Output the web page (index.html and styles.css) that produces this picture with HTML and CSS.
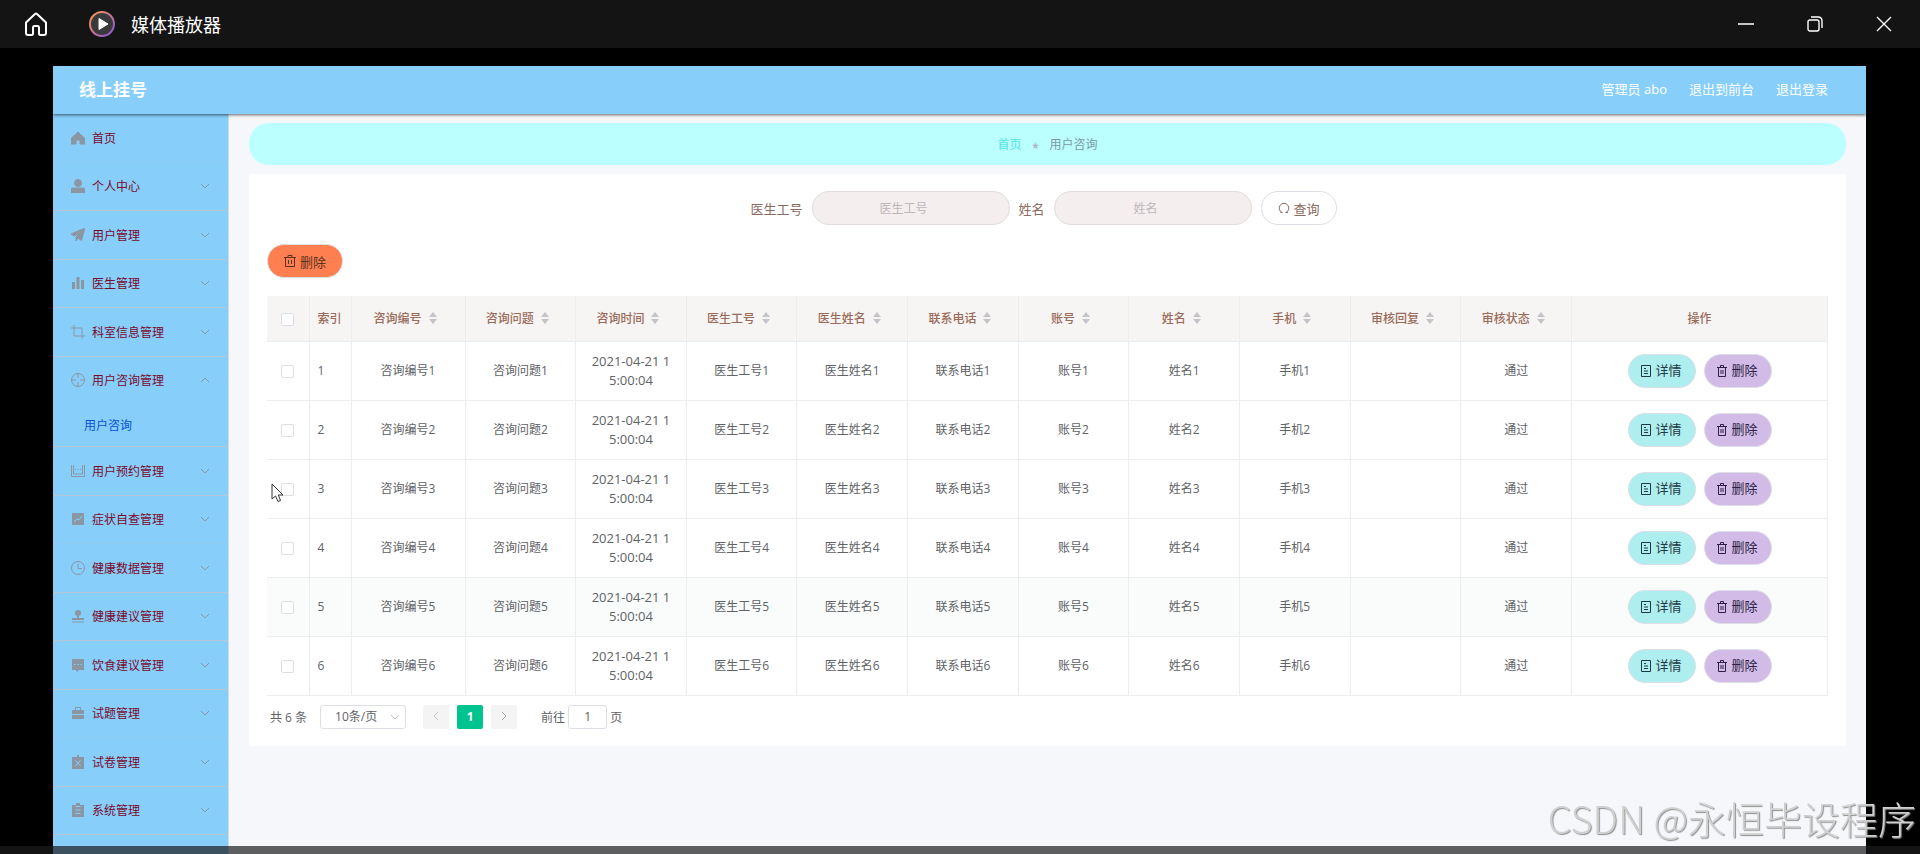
FILE: index.html
```
<!DOCTYPE html>
<html lang="zh-CN">
<head>
    <meta charset="UTF-8">
    <title>媒体播放器</title>
    <link rel="stylesheet" href="styles.css">
</head>
<body>
    <div class="titlebar">
        <button class="title-btn" aria-label="主页">
            <svg width="24" height="26" viewBox="0 0 24 26" fill="none" stroke="#fff" stroke-width="2" stroke-linejoin="round"><path d="M2 11.500 L11 3 Q12 2 13 3 L22 11.500 V22 Q22 24 20 24 H16.500 Q15 24 15 22.500 V17 Q15 15 13.500 15 H10.500 Q9 15 9 17 V22.500 Q9 24 7.500 24 H4 Q2 24 2 22 Z"/></svg>
        </button>
        <svg class="player-logo" width="28" height="28" viewBox="0 0 28 28">
            <defs>
                <linearGradient id="ring" x1="0" y1="0" x2="1" y2="1">
                    <stop offset="0" stop-color="#ff9a3c"/>
                    <stop offset="0.500" stop-color="#c9739a"/>
                    <stop offset="1" stop-color="#7a55d8"/>
                </linearGradient>
            </defs>
            <circle cx="14" cy="14" r="12" fill="#3a3a3c" stroke="url(#ring)" stroke-width="2"/>
            <path d="M11 8.500 L20 14 L11 19.500 Z" fill="#fff" stroke="#fff" stroke-linejoin="round"/>
        </svg>
        <span class="title-text">媒体播放器</span>
        <div class="window-btns">
            <button class="title-btn" aria-label="最小化">
                <svg width="16" height="16" viewBox="0 0 16 16" stroke="#fff" stroke-width="1.500"><path d="M0 8 H16"/></svg>
            </button>
            <button class="title-btn" aria-label="还原">
                <svg width="16" height="16" viewBox="0 0 16 16" fill="none" stroke="#fff" stroke-width="1.400"><rect x="1" y="4" width="11" height="11" rx="2"/><path d="M4 1 H11 Q15 1 15 5 V12"/></svg>
            </button>
            <button class="title-btn" aria-label="关闭">
                <svg width="16" height="16" viewBox="0 0 16 16" stroke="#fff" stroke-width="1.400"><path d="M1 1 L15 15 M15 1 L1 15"/></svg>
            </button>
        </div>
    </div>

    <div class="app">
        <header class="header">
            <h1>线上挂号</h1>
            <nav class="user-nav">
                <span>管理员 abo</span>
                <a href="#">退出到前台</a>
                <a href="#">退出登录</a>
            </nav>
        </header>

        <div class="main">
            <nav class="sidebar" id="sidebar"></nav>

            <main class="content">
                <div class="breadcrumb">
                    <a href="#">首页</a>
                    <span class="star">★</span>
                    <span>用户咨询</span>
                </div>

                <section class="card">
                    <form class="search">
                        <label for="gonghao">医生工号</label>
                        <input type="text" id="gonghao" placeholder="医生工号">
                        <label for="xingming">姓名</label>
                        <input type="text" id="xingming" placeholder="姓名">
                        <button type="button" class="btn btn-search">
                            <svg width="12" height="12" viewBox="0 0 12 12" fill="none" stroke="#8b6b60"><path d="M4 10.500 A4.800 4.800 0 1 1 8 10.500 M7.500 10.500 H10 M4.500 10.500 H2.500"/></svg>
                            查询
                        </button>
                    </form>

                    <button type="button" class="btn btn-remove">
                        <svg width="12" height="12" viewBox="0 0 12 12" fill="none" stroke="#5a3320"><path d="M0 2.500 H12 M4 2.500 V0.500 H8 V2.500 M1.500 2.500 V11.500 H10.500 V2.500 M4.500 5 V9 M7.500 5 V9"/></svg>
                        删除
                    </button>

                    <table>
                        <colgroup>
                            <col class="col-check">
                            <col class="col-index">
                            <col class="col-number">
                            <col span="10">
                            <col class="col-action">
                        </colgroup>
                        <thead>
                            <tr id="thead"></tr>
                        </thead>
                        <tbody id="tbody"></tbody>
                    </table>

                    <div class="pagination">
                        <span>共 6 条</span>
                        <div class="page-size">
                            <select aria-label="每页条数">
                                <option>10条/页</option>
                            </select>
                            <svg width="10" height="6" viewBox="0 0 10 6" fill="none" stroke="#c0c4cc"><path d="M1 1 L5 5 L9 1"/></svg>
                        </div>
                        <div class="pager">
                            <button type="button" aria-label="上一页"><svg width="6" height="10" viewBox="0 0 6 10" fill="none" stroke="#c0c4cc"><path d="M5 1 L1 5 L5 9"/></svg></button>
                            <button type="button" class="active">1</button>
                            <button type="button" aria-label="下一页"><svg width="6" height="10" viewBox="0 0 6 10" fill="none" stroke="#a0a4aa"><path d="M1 1 L5 5 L1 9"/></svg></button>
                        </div>
                        <div class="jump">
                            <label for="page">前往</label>
                            <input type="text" id="page" value="1">
                            <span>页</span>
                        </div>
                    </div>
                </section>
            </main>
        </div>
    </div>

    <div class="player-bar"></div>
    <div class="watermark">CSDN @永恒毕设程序</div>

    <script>
        const icons = {
            home: '<path fill="currentColor" d="M7 1 L14 7.500 V13 H9 V9 H5 V13 H0 V7.500 Z"/>',
            user: '<circle fill="currentColor" cx="7" cy="4" r="3.500"/><path fill="currentColor" d="M0 14 V11 Q0 9 2 9 H12 Q14 9 14 11 V14 Z"/>',
            plane: '<path fill="currentColor" d="M14 0 L0 6 L3.500 8 L11 3 L5 9 V13 L7 10 L10.500 12.500 Z"/>',
            chart: '<path stroke="none" fill="currentColor" d="M1 6 H4 V13 H1 Z M5.500 1 H8.500 V13 H5.500 Z M10 4 H13 V13 H10 Z"/>',
            crop: '<path d="M3 0 V11 H14 M0 3 H11 V14"/>',
            aim: '<circle cx="7" cy="7" r="6.500"/><path d="M7 0.500 V5 M7 9 V13.500 M0.500 7 H5 M9 7 H13.500"/>',
            chat: '<path d="M0.500 1 V12.500 H13.500 V1 M2.500 1 V10 H11.500 V1"/><path d="M4 5.500 H5 M6.500 5.500 H7.500 M9 5.500 H10"/>',
            trend: '<path stroke="none" fill="currentColor" d="M1 1 H13 V13 H1 Z"/><path stroke="#87cefa" d="M3 10 L6 7 L8 8 L11 4"/>',
            clock: '<circle cx="7" cy="7" r="6.500"/><path d="M7 3 V7.500 H11"/>',
            stamp: '<circle stroke="none" fill="currentColor" cx="7" cy="4" r="3"/><path stroke="none" fill="currentColor" d="M6 6 H8 V9 H13 V11 H1 V9 H6 Z"/><path d="M1 13 H13"/>',
            message: '<path stroke="none" fill="currentColor" d="M1 1 H13 V12 H8 L6 14 L5 12 H1 Z"/><path stroke="#87cefa" d="M3 6.500 H4.500 M6.300 6.500 H7.800 M9.500 6.500 H11"/>',
            bag: '<path stroke="none" fill="currentColor" d="M1 4 H13 V8 H1 Z M1 9 H13 V13 H1 Z"/><path d="M4.500 4 V1.500 H9.500 V4"/>',
            paper: '<path stroke="none" fill="currentColor" d="M1 2 H6 V0 H8 V2 H13 V14 H1 Z"/><path stroke="#87cefa" d="M4.500 5.500 L9.500 11 M9.500 5.500 L4.500 11"/>',
            list: '<path stroke="none" fill="currentColor" d="M1 2 H5 V0 H9 V2 H13 V14 H1 Z"/><path stroke="#87cefa" d="M4.500 3.500 H9.500 M4.500 7 H9.500 M4.500 10.500 H9.500"/>'
        };

        // icon, name, class
        const menu = [
            ['home', '首页', 'single no-line'],
            ['user', '个人中心', ''],
            ['plane', '用户管理', ''],
            ['chart', '医生管理', ''],
            ['crop', '科室信息管理', ''],
            ['aim', '用户咨询管理', 'open'],
            ['chat', '用户预约管理', ''],
            ['trend', '症状自查管理', 'no-line'],
            ['clock', '健康数据管理', ''],
            ['stamp', '健康建议管理', ''],
            ['message', '饮食建议管理', ''],
            ['bag', '试题管理', 'no-line'],
            ['paper', '试卷管理', ''],
            ['list', '系统管理', '']
        ];

        document.getElementById('sidebar').innerHTML = menu.map(([icon, name, cls]) => `
            <a href="#" class="menu-item ${cls}">
                <svg width="14" height="14" viewBox="0 0 14 14" fill="none" stroke="currentColor" stroke-width="1">${icons[icon]}</svg>
                <span>${name}</span>
                <svg class="arrow" width="10" height="6" viewBox="0 0 10 6" fill="none" stroke="currentColor"><path d="M1 1 L5 5 L9 1"/></svg>
            </a>
            ${cls === 'open' ? '<a href="#" class="submenu-item">用户咨询</a>' : ''}
        `).join('');

        const columns = ['咨询编号', '咨询问题', '咨询时间', '医生工号', '医生姓名', '联系电话', '账号', '姓名', '手机', '审核回复', '审核状态'];
        const sort = '<svg class="sort" width="8" height="12" viewBox="0 0 8 12" fill="#c4c4c8"><path d="M4 0 L8 5 H0 Z M4 12 L8 7 H0 Z"/></svg>';

        document.getElementById('thead').innerHTML =
            '<th><input type="checkbox" aria-label="全选"></th><th class="index">索引</th>' +
            columns.map(name => `<th><span class="sortable">${name}${sort}</span></th>`).join('') +
            '<th>操作</th>';

        function cellText(name, i) {
            if (name === '咨询时间') return '2021-04-21 15:00:04';
            if (name === '审核回复') return '';
            if (name === '审核状态') return '通过';
            return name + i;
        }

        const pointer = '<svg class="pointer" width="13" height="20" viewBox="0 0 13 20" fill="#fff" stroke="#333"><path d="M1 1 V16 L4.500 13 L7 18.500 L9.500 17.500 L7.300 12 H12 Z"/></svg>';
        let rows = '';
        for (let i = 1; i <= 6; i++) {
            rows += `
                <tr class="${i === 5 ? 'hover' : ''}">
                    <td><input type="checkbox" aria-label="选择第${i}行">${i === 3 ? pointer : ''}</td>
                    <td class="index">${i}</td>
                    ${columns.map(name => `<td class="${name === '咨询时间' ? 'time' : ''}">${cellText(name, i)}</td>`).join('')}
                    <td>
                        <div class="actions">
                            <button type="button" class="btn btn-detail">
                                <svg width="10" height="12" viewBox="0 0 10 12" fill="none" stroke="#1f3a44"><path d="M0.500 0.500 H9.500 V11.500 H0.500 Z M3 3.500 H5 M3 6 H7 M3 8.500 H7"/></svg>
                                详情
                            </button>
                            <button type="button" class="btn btn-delete">
                                <svg width="10" height="12" viewBox="0 0 10 12" fill="none" stroke="#2e1f44"><path d="M0 2.500 H10 M3.500 2.500 V0.500 H6.500 V2.500 M1.500 2.500 V11.500 H8.500 V2.500 M4 5 V9 M6 5 V9"/></svg>
                                删除
                            </button>
                        </div>
                    </td>
                </tr>`;
        }
        document.getElementById('tbody').innerHTML = rows;
    </script>
</body>
</html>
```
FILE: styles.css
```
* {
    box-sizing: border-box;
}

body {
    display: flex;
    flex-direction: column;
    min-height: 100vh;
    margin: 0;
    background: #000;
    font-family: "Open Sans", "Noto Sans CJK SC", sans-serif;
    font-size: 12px;
    color: #606266;
}

a {
    color: inherit;
    text-decoration: none;
}

button, input, select {
    font: inherit;
    color: inherit;
}

button {
    cursor: pointer;
}

/* player title bar */
.titlebar {
    display: flex;
    align-items: center;
    height: 48px;
    padding: 0 28px 0 24px;
    background: #141414;
    color: #fff;
}

.title-btn {
    display: flex;
    padding: 0;
    border: 0;
    background: none;
}

.player-logo {
    margin: 0 15px 0 40px;
}

.title-text {
    font-size: 18px;
}

.window-btns {
    display: flex;
    gap: 53px;
    margin-left: auto;
}

/* page */
.app {
    display: flex;
    flex-direction: column;
    flex: 1;
    margin: 18px 54px 0 53px;
    background: #f6f7fa;
}

.header {
    position: relative;
    display: flex;
    align-items: center;
    justify-content: space-between;
    height: 48px;
    padding: 0 38px 4px 26px;
    background: #87cefa;
    box-shadow: 0 1px 3px rgba(0, 0, 0, 0.6);
    color: #fff;
}

.header h1 {
    margin: 0;
    font-size: 17px;
}

.user-nav {
    display: flex;
    gap: 22px;
    font-size: 13px;
}

.main {
    display: flex;
    flex: 1;
}

.sidebar {
    display: flex;
    flex-direction: column;
    flex-shrink: 0;
    width: 176px;
    padding-bottom: 19px;
    border-right: 1px solid #c3dff0;
    background: #87cefa;
    color: #7a0a2c;
}

.menu-item {
    display: flex;
    flex: 1;
    align-items: center;
    gap: 7px;
    min-height: 48px;
    padding: 0 18px;
    border-bottom: 1px solid #b3c8d4;
}

.menu-item svg {
    color: #8b96a3;
}

.menu-item .arrow {
    margin-left: auto;
}

.menu-item.no-line {
    border-color: #8fcbf2;
}

.menu-item.open {
    border-color: transparent;
}

.menu-item.open .arrow {
    transform: rotate(180deg);
}

.menu-item.single .arrow {
    display: none;
}

.submenu-item {
    height: 42px;
    padding-left: 31px;
    border-bottom: 1px solid #b3c8d4;
    line-height: 42px;
    color: #0a50d8;
}

.content {
    flex: 1;
    min-width: 0;
    padding: 9px 20px;
}

.breadcrumb {
    display: flex;
    align-items: center;
    justify-content: center;
    gap: 10px;
    height: 42px;
    margin-bottom: 9px;
    border-radius: 20px;
    background: #bbffff;
    color: #7a9aa4;
}

.breadcrumb a {
    color: #4fe3e3;
}

.breadcrumb .star {
    font-size: 8px;
    color: #a9b8cc;
}

.card {
    padding: 17px 18px;
    background: #fff;
}

.search {
    display: flex;
    align-items: center;
    justify-content: center;
    gap: 9px;
    margin-bottom: 19px;
    padding-right: 8px;
    color: #8b6b60;
}

.search label {
    font-size: 13px;
}

.search input {
    width: 198px;
    height: 34px;
    padding: 0 16px 0 2px;
    border: 1px solid #e2dcde;
    border-radius: 17px;
    background: #f4eeef;
    text-align: center;
}

.search input::placeholder {
    color: #bdb6ba;
}

.btn {
    display: flex;
    align-items: center;
    justify-content: center;
    gap: 4px;
    width: 68px;
    height: 34px;
    padding: 0;
    border: 1px solid #dcdfe6;
    border-radius: 17px;
    font-size: 13px;
    white-space: nowrap;
}

.btn-search {
    width: 76px;
    background: #fff;
}

.btn-remove {
    width: 76px;
    margin-bottom: 18px;
    background: #ff7f50;
    color: #5a3320;
}

.btn-detail {
    background: #afeeee;
    color: #1f3a44;
}

.btn-delete {
    background: #d3bbe8;
    color: #2e1f44;
}

table {
    width: 100%;
    table-layout: fixed;
    border-collapse: collapse;
}

.col-check,
.col-index {
    width: 42px;
}

.col-number {
    width: 114px;
}

.col-action {
    width: 256px;
}

th, td {
    position: relative;
    padding: 0;
    border-right: 1px solid #ebeef0;
    border-bottom: 1px solid #ebeef0;
    text-align: center;
    line-height: 19px;
}

th {
    height: 45px;
    background: #f7f4f4;
    font-weight: 500;
    color: #996b58;
}

td {
    height: 59px;
}

.index {
    padding-left: 8px;
    text-align: left;
}

.time {
    padding: 0 14px;
    font-size: 13px;
    word-break: break-all;
}

tr.hover {
    background: #fafcfc;
}

.sortable {
    display: flex;
    align-items: center;
    justify-content: center;
    gap: 7px;
    padding-right: 6px;
}

input[type="checkbox"] {
    width: 13px;
    height: 13px;
    margin: 0;
    appearance: none;
    border: 1px solid #dcdfe6;
    border-radius: 2px;
    background: #fff;
    vertical-align: middle;
}

.pointer {
    position: absolute;
    top: 23px;
    left: 4px;
}

.actions {
    display: flex;
    justify-content: center;
    gap: 8px;
}

.pagination {
    display: flex;
    align-items: center;
    margin-top: 9px;
    padding-left: 3px;
}

.page-size {
    position: relative;
    margin: 0 17px 0 13px;
}

.page-size select {
    width: 86px;
    height: 24px;
    padding: 0 14px;
    appearance: none;
    border: 1px solid #dcdfe6;
    border-radius: 3px;
    background: #fff;
}

.page-size svg {
    position: absolute;
    top: 9px;
    right: 6px;
}

.pager {
    display: flex;
    gap: 8px;
}

.pager button {
    width: 26px;
    height: 24px;
    padding: 0;
    border: 0;
    border-radius: 2px;
    background: #f4f4f5;
}

.pager .active {
    background: #00c48f;
    color: #fff;
    font-weight: 700;
}

.jump {
    display: flex;
    align-items: center;
    gap: 3px;
    margin-left: 24px;
}

.jump input {
    width: 39px;
    height: 24px;
    border: 1px solid #dcdfe6;
    border-radius: 3px;
    text-align: center;
}

.player-bar {
    position: fixed;
    right: 0;
    bottom: 0;
    left: 0;
    height: 8px;
    background: rgba(28, 28, 28, 0.7);
}

.watermark {
    position: fixed;
    right: 4px;
    bottom: 8px;
    font-family: "Noto Sans CJK SC", sans-serif;
    font-size: 38px;
    font-weight: 300;
    line-height: 56px;
    color: #d0d0d0;
    text-shadow: 1px 1px 1px #909090;
}
```
